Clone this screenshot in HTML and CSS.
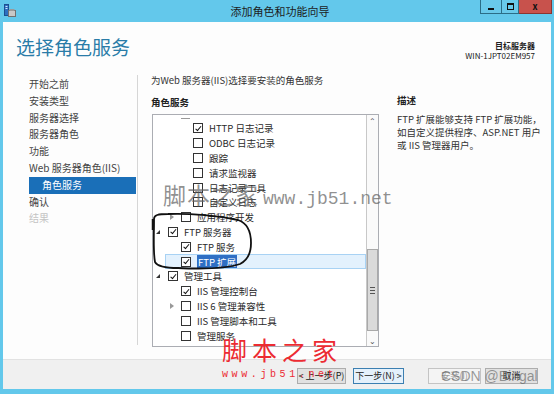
FILE: index.html
```html
<!DOCTYPE html>
<html lang="zh-CN">
<head>
    <meta charset="UTF-8">
    <title>添加角色和功能向导</title>
    <link rel="stylesheet" href="styles.css">
</head>
<body>
    <div class="window">
        <!-- Title bar -->
        <div class="titlebar">
            <svg class="app-icon" width="12" height="13" viewBox="0 0 12 13">
                <rect x="0.5" y="0.5" width="4" height="11" fill="#2d6fc0" stroke="#1c4f91"/>
                <rect x="1.5" y="2" width="2" height="1" fill="#cfe4ff"/>
                <rect x="1.5" y="4" width="2" height="1" fill="#cfe4ff"/>
                <rect x="4.5" y="6.5" width="7" height="6" fill="#c8c8c8" stroke="#707070"/>
                <rect x="5.5" y="5" width="5" height="2" fill="#9a9a9a"/>
            </svg>
            <div class="title">添加角色和功能向导</div>
            <div class="controls">
                <span class="ctl ctl-min"><i></i></span>
                <span class="ctl ctl-max"><i></i></span>
                <span class="ctl ctl-close">x</span>
            </div>
        </div>

        <div class="client">
            <!-- Header -->
            <div class="header">
                <h1>选择角色服务</h1>
                <div class="target">
                    <div class="target-label">目标服务器</div>
                    <div>WIN-1JPT02EM957</div>
                </div>
            </div>

            <div class="main">
                <!-- Wizard steps -->
                <ul class="steps">
                    <li>开始之前</li>
                    <li>安装类型</li>
                    <li>服务器选择</li>
                    <li>服务器角色</li>
                    <li>功能</li>
                    <li>Web 服务器角色(IIS)</li>
                    <li class="active">角色服务</li>
                    <li>确认</li>
                    <li class="disabled">结果</li>
                </ul>

                <div class="content">
                    <div class="left-col">
                        <p class="intro">为Web 服务器(IIS)选择要安装的角色服务</p>
                        <h2>角色服务</h2>
                        <div class="tree-box">
                            <div class="tree">
                                <div class="partial"></div>
                                <div class="row lv2"><span class="exp"></span><span class="cb on"></span><span>HTTP 日志记录</span></div>
                                <div class="row lv2"><span class="exp"></span><span class="cb"></span><span>ODBC 日志记录</span></div>
                                <div class="row lv2"><span class="exp"></span><span class="cb"></span><span>跟踪</span></div>
                                <div class="row lv2"><span class="exp"></span><span class="cb"></span><span>请求监视器</span></div>
                                <div class="row lv2"><span class="exp"></span><span class="cb"></span><span>日志记录工具</span></div>
                                <div class="row lv2"><span class="exp"></span><span class="cb"></span><span>自定义日志</span></div>
                                <div class="row lv1"><span class="exp closed"></span><span class="cb"></span><span>应用程序开发</span></div>
                                <div class="row lv0"><span class="exp open"></span><span class="cb on"></span><span>FTP 服务器</span></div>
                                <div class="row lv1"><span class="exp"></span><span class="cb on"></span><span>FTP 服务</span></div>
                                <div class="row lv1 selected"><span class="exp"></span><span class="cb on"></span><span class="sel-text">FTP 扩展</span></div>
                                <div class="row lv0"><span class="exp open"></span><span class="cb on"></span><span>管理工具</span></div>
                                <div class="row lv1"><span class="exp"></span><span class="cb on"></span><span>IIS 管理控制台</span></div>
                                <div class="row lv1"><span class="exp closed"></span><span class="cb"></span><span>IIS 6 管理兼容性</span></div>
                                <div class="row lv1"><span class="exp"></span><span class="cb"></span><span>IIS 管理脚本和工具</span></div>
                                <div class="row lv1"><span class="exp"></span><span class="cb"></span><span>管理服务</span></div>
                            </div>
                            <div class="scrollbar">
                                <span class="arrow">&#8963;</span>
                                <div class="track">
                                    <div class="thumb"><span class="grip"></span></div>
                                </div>
                                <span class="arrow">&#8964;</span>
                            </div>
                        </div>
                    </div>

                    <div class="desc">
                        <h2>描述</h2>
                        <p>FTP 扩展能够支持 FTP 扩展功能，<br>如自定义提供程序、ASP.NET 用户<br>或 IIS 管理器用户。</p>
                    </div>
                </div>
            </div>

            <!-- Buttons -->
            <div class="footer">
                <button class="btn btn-prev">&lt; 上一步(P)</button>
                <button class="btn btn-next">下一步(N) &gt;</button>
                <button class="btn btn-install" disabled>安装(I)</button>
                <button class="btn btn-cancel">取消</button>
            </div>
        </div>
    </div>

    <!-- Annotations and watermarks drawn over the screenshot -->
    <svg class="scribble" width="554" height="394" viewBox="0 0 554 394">
        <path d="M154 219 C154 215 158 214 168 214 C190 213 220 216 238 220 C247 223 251 232 251 243 C251 252 248 260 240 264 C225 269 200 269 178 268 C165 268 157 266 155 262 C153 252 154 236 154 219"
              fill="none" stroke="#111" stroke-width="1.8"/>
        <path d="M153 219 L153 230" stroke="#111" stroke-width="2.5"/>
    </svg>
    <div class="wm-gray"><span class="wm-cn">脚本之家</span><span class="wm-url">www.jb51.net</span></div>
    <div class="wm-red">脚本之家</div>
    <div class="wm-red-url">www.jb51.net</div>
    <div class="wm-csdn">CSDN @Bingal</div>
</body>
</html>
```

FILE: styles.css
```css
body {
    margin: 0;
    background-color: #63c8eb;
    font-family: "Noto Sans CJK SC", "Noto Sans", sans-serif;
    color: #1e1e1e;
    overflow: hidden;
}

.window {
    width: 554px;
    height: 394px;
    display: flex;
    flex-direction: column;
}

/* Title bar */
.titlebar {
    height: 22px;
    display: grid;
    grid-template-columns: 1fr auto 1fr;
    align-items: start;
}

.app-icon {
    margin: 4px 0 0 4px;
}

.title {
    font-size: 11px;
    line-height: 22px;
    color: #1c1c1c;
    padding-left: 6px;
}

.controls {
    justify-self: end;
    display: flex;
    margin-right: 2px;
}

.ctl {
    height: 13px;
    border: 1px solid #2b6d87;
    border-top: none;
    display: flex;
    align-items: center;
    justify-content: center;
    background-color: #69c9ea;
}

.ctl-min {
    width: 20px;
}

.ctl-min i {
    width: 6px;
    height: 2px;
    background: #111;
    margin-top: 4px;
}

.ctl-max {
    width: 16px;
    border-left: none;
}

.ctl-max i {
    width: 5px;
    height: 4px;
    border: 1px solid #111;
    border-top-width: 2px;
}

.ctl-close {
    width: 32px;
    border-left: none;
    background-color: #c8524c;
    border-color: #8c3430;
    font-size: 9px;
    font-weight: bold;
    color: #111;
}

/* Client area */
.client {
    flex: 1;
    margin: 0 3px 5px 3px;
    background-color: #fdfdfd;
    display: flex;
    flex-direction: column;
}

.header {
    height: 48px;
    display: flex;
    justify-content: space-between;
    align-items: flex-start;
}

.header h1 {
    margin: 13px 0 0 13px;
    font-size: 19px;
    font-weight: normal;
    color: #2a7ca8;
    line-height: 24px;
}

.target {
    margin: 19px 16px 0 0;
    text-align: right;
    font-size: 8px;
    line-height: 10px;
    color: #222;
}

.target-label {
    font-weight: bold;
}

.main {
    flex: 1;
    display: flex;
}

/* Steps */
.steps {
    list-style: none;
    margin: 5px 0 14px 0;
    padding: 1px 1px 0 26px;
    width: 107px;
    border-right: 1px solid #d6d6d6;
    font-size: 10px;
    color: #444;
}

.steps li {
    height: 16.8px;
    line-height: 16.8px;
    white-space: nowrap;
}

.steps li.active {
    background-color: #1a6fb8;
    color: #ffffff;
    padding-left: 13px;
}

.steps li.disabled {
    color: #c4c4c4;
}

/* Content */
.content {
    flex: 1;
    display: flex;
    padding: 3px 0 0 13px;
}

.left-col {
    width: 228px;
}

.intro {
    margin: 0;
    font-size: 9.5px;
    line-height: 14px;
    color: #333;
}

h2 {
    margin: 8px 0 0 0;
    font-size: 9.5px;
    line-height: 14px;
    font-weight: bold;
    color: #222;
}

.tree-box {
    margin: 5px 0 0 1px;
    height: 231px;
    border: 1px solid #abadb3;
    display: flex;
    background: #fff;
}

.tree {
    flex: 1;
    overflow: hidden;
    font-size: 9.5px;
    color: #2a2a2a;
}

.partial {
    height: 6px;
    position: relative;
}

.partial::after {
    content: "";
    position: absolute;
    left: 28px;
    top: 3px;
    width: 9px;
    height: 1px;
    background: #999;
}

.row {
    height: 14.8px;
    display: flex;
    align-items: center;
    white-space: nowrap;
}

.row.lv0 { padding-left: 2px; }
.row.lv1 { padding-left: 15px; }
.row.lv2 { padding-left: 27px; }

.row.selected {
    background-color: #e3f1fd;
    outline: 1px solid #a8d2f4;
    outline-offset: -1px;
    margin-left: 12px;
    padding-left: 3px;
}

.sel-text {
    background-color: #2f6fc4;
    color: #fff;
    padding: 0 1px;
}

.exp {
    width: 13px;
    height: 10px;
    flex: none;
    position: relative;
}

.exp.open::after {
    content: "";
    position: absolute;
    left: 1px;
    top: 3px;
    border-style: solid;
    border-width: 0 0 4px 4px;
    border-color: transparent transparent #333 transparent;
}

.exp.closed::after {
    content: "";
    position: absolute;
    left: 2px;
    top: 2px;
    border-style: solid;
    border-width: 3px 0 3px 4px;
    border-color: transparent transparent transparent #999;
}

.cb {
    width: 8px;
    height: 8px;
    flex: none;
    border: 1px solid #333;
    background: #fff;
    margin-right: 6px;
    position: relative;
}

.cb.on::after {
    content: "";
    position: absolute;
    left: 2.5px;
    top: 0.5px;
    width: 2px;
    height: 4.5px;
    border: solid #111;
    border-width: 0 1.4px 1.4px 0;
    transform: rotate(40deg);
}

/* Scrollbar */
.scrollbar {
    width: 11px;
    border-left: 1px solid #c8c8c8;
    display: flex;
    flex-direction: column;
    background: #fafafa;
}

.arrow {
    height: 11px;
    font-size: 8px;
    line-height: 11px;
    text-align: center;
    color: #555;
}

.track {
    flex: 1;
    display: flex;
    flex-direction: column;
    justify-content: flex-end;
    padding-bottom: 4px;
}

.thumb {
    height: 80px;
    background: #dadada;
    border: 1px solid #a9a9a9;
    display: flex;
    align-items: center;
    justify-content: center;
}

.grip {
    width: 5px;
    height: 5px;
    border-top: 1px solid #555;
    border-bottom: 1px solid #555;
    position: relative;
}

.grip::after {
    content: "";
    position: absolute;
    left: 0;
    right: 0;
    top: 2px;
    height: 1px;
    background: #555;
}

/* Description */
.desc {
    margin-left: 18px;
    padding-top: 20px;
}

.desc h2 {
    margin: 0;
}

.desc p {
    margin: 6px 0 0 0;
    font-size: 9.5px;
    line-height: 13px;
    color: #333;
}

/* Footer */
.footer {
    height: 29px;
    background-color: #f0f0f0;
    border-top: 1px solid #e2e2e2;
    display: flex;
    align-items: center;
    padding-left: 294px;
}

.btn {
    height: 16px;
    font-family: inherit;
    font-size: 9px;
    line-height: 12px;
    padding: 0;
    background: #e1e1e1;
    border: 1px solid #adadad;
    color: #222;
    margin-top: 2px;
}

.btn-prev { width: 49px; }
.btn-next { width: 51px; margin-left: 7px; border-color: #3c7fb1; background: #e5f1fb; }
.btn-install { width: 53px; margin-left: 24px; background: #f4f4f4; border-color: #c4c4c4; color: #9a9a9a; }
.btn-cancel { width: 53px; margin-left: 4px; }

/* Overlays: hand drawn circle and watermarks */
.scribble {
    position: absolute;
    left: 0;
    top: 0;
    pointer-events: none;
}

.wm-gray {
    position: absolute;
    z-index: 2;
    left: 163px;
    top: 180px;
    display: flex;
    align-items: baseline;
    gap: 4px;
    color: rgba(95, 95, 95, 0.7);
    white-space: nowrap;
}

.wm-cn {
    font-family: "Noto Sans CJK SC", sans-serif;
    font-size: 23px;
    line-height: 28px;
    letter-spacing: 1px;
}

.wm-url {
    font-family: "Liberation Mono", monospace;
    font-size: 18px;
    line-height: 28px;
}

.wm-red {
    position: absolute;
    z-index: 2;
    left: 222px;
    top: 334px;
    font-size: 25px;
    line-height: 30px;
    letter-spacing: 5px;
    color: #ec2b32;
}

.wm-red-url {
    position: absolute;
    z-index: 2;
    left: 222px;
    top: 369px;
    font-family: "Liberation Mono", monospace;
    font-size: 10px;
    line-height: 12px;
    letter-spacing: 3.6px;
    color: #ec2b32;
}

.wm-csdn {
    position: absolute;
    z-index: 2;
    left: 441px;
    top: 367px;
    font-family: "Liberation Sans", sans-serif;
    font-size: 14px;
    line-height: 18px;
    color: rgba(90, 90, 90, 0.6);
}
```
